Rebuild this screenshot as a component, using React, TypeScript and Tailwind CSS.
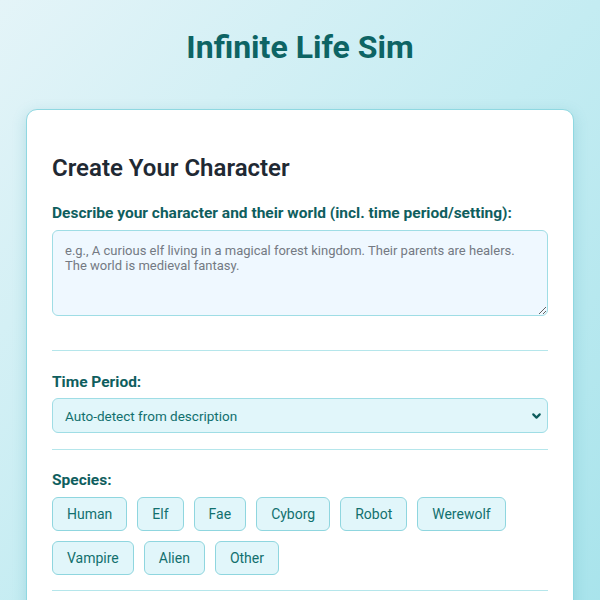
import { ChevronDown } from "lucide-react";

const species = [
  "Human",
  "Elf",
  "Fae",
  "Cyborg",
  "Robot",
  "Werewolf",
  "Vampire",
  "Alien",
  "Other",
];

export default function App() {
  return (
    <div className="min-h-screen bg-gradient-to-br from-[#e4f4f8] via-[#c4ecf2] to-[#a6e3eb] px-[26px] pt-[28px] pb-10 font-['Roboto',sans-serif]">
      {/* Header */}
      <h1 className="text-center text-[32px] font-bold leading-[38px] text-[#0d6464]">
        Infinite Life Sim
      </h1>

      {/* Card */}
      <div className="mt-[43px] rounded-[11px] border border-[#8fd8e1] bg-white px-[25px] pt-[42px] pb-6 shadow-[0_4px_14px_rgba(60,160,175,0.25)]">
        <h2 className="text-[24px] font-semibold leading-8 text-[#1f2933]">
          Create Your Character
        </h2>

        {/* Description */}
        <div className="mt-[17px] border-b border-[#b5e6eb] pb-[34px]">
          <label className="block text-[15.5px] font-bold leading-6 text-[#0f5e5e]">
            Describe your character and their world (incl. time period/setting):
          </label>
          <textarea
            className="mt-[5px] block h-[86px] w-full rounded-[6px] border border-[#9fdde5] bg-[#eff8ff] px-3 py-[12px] text-[13px] leading-[15px] text-[#374151] placeholder:text-[#747a83] outline-none"
            placeholder="e.g., A curious elf living in a magical forest kingdom. Their parents are healers. The world is medieval fantasy."
          />
        </div>

        {/* Time period */}
        <div className="border-b border-[#b5e6eb] pt-[19px] pb-[16px]">
          <label className="block text-[15.5px] font-bold leading-6 text-[#0f5e5e]">
            Time Period:
          </label>
          <div className="relative mt-[4px] h-[35px] rounded-[6px] border border-[#9fdde5] bg-[#e1f6fa]">
            <span className="absolute left-[12px] top-1/2 -translate-y-1/2 text-[13.5px] text-[#11706e]">
              Auto-detect from description
            </span>
            <ChevronDown
              className="absolute right-[4px] top-1/2 h-[13px] w-[13px] -translate-y-1/2 text-[#0d5c5c]"
              strokeWidth={4}
            />
          </div>
        </div>

        {/* Species */}
        <div className="border-b border-[#b5e6eb] pt-[18px] pb-[15px]">
          <label className="block text-[15.5px] font-bold leading-6 text-[#0f5e5e]">
            Species:
          </label>
          <div className="mt-[5px] flex flex-wrap gap-[10px]">
            {species.map((s) => (
              <button
                key={s}
                className="h-[34px] rounded-[6px] border border-[#8fd6df] bg-[#e1f6fa] px-[14px] text-[14px] text-[#11706e]"
              >
                {s}
              </button>
            ))}
          </div>
        </div>
      </div>
    </div>
  );
}
